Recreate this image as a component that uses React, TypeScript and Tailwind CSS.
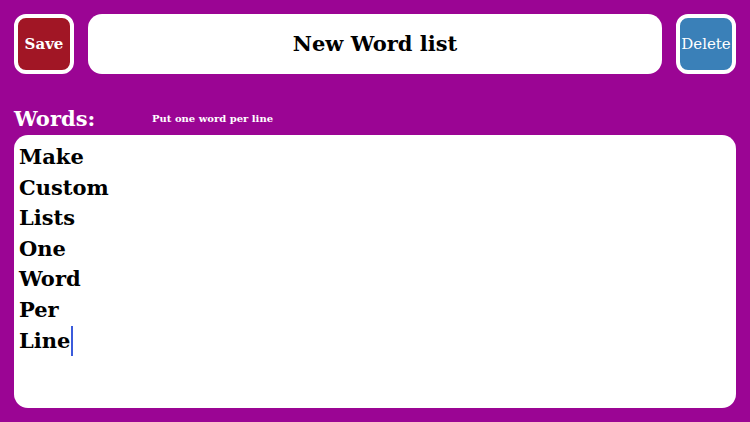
const words = ["Make", "Custom", "Lists", "One", "Word", "Per", "Line"]

export default function App() {
  return (
    <div
      className="w-[750px] h-[422px] bg-[#9b0594] px-[14px] pt-[14px] pb-[14px] flex flex-col"
      style={{ fontFamily: '"DejaVu Serif", "Liberation Serif", serif' }}
    >
      <div className="flex items-center gap-[14px] h-[60px]">
        <button className="w-[60px] h-[60px] rounded-[12px] border-[4px] border-white bg-[#a11625] text-white text-[15px] font-bold flex items-center justify-center">
          Save
        </button>
        <div className="flex-1 h-[60px] rounded-[14px] bg-white flex items-center justify-center text-[21px] font-bold text-black">
          New Word list
        </div>
        <button className="w-[60px] h-[60px] rounded-[12px] border-[4px] border-white bg-[#3a80b8] text-white text-[15px] flex items-center justify-center overflow-hidden">
          Delete
        </button>
      </div>

      <div className="flex items-end mt-[35px] h-[20px]">
        <span className="text-white text-[21px] font-bold leading-none w-[138px]">Words:</span>
        <span className="text-white text-[10px] font-bold leading-none mb-[5px]">Put one word per line</span>
      </div>

      <div className="mt-[6px] flex-1 rounded-[14px] bg-white px-[5px] pt-[7px]">
        {words.map((w, i) => (
          <div key={w} className="text-[21px] font-bold text-black leading-[30.6px] flex items-center">
            {w}
            {i === words.length - 1 && <span className="inline-block w-[2px] h-[30px] bg-[#3b5bdb] ml-[1px]" />}
          </div>
        ))}
      </div>
    </div>
  )
}
